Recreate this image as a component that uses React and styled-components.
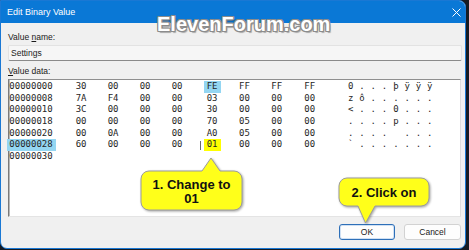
import React from 'react';
import styled, { createGlobalStyle } from 'styled-components';

const GlobalStyle = createGlobalStyle`
  html, body {
    margin: 0;
    background: #161b23;
  }
  * { box-sizing: border-box; }
`;

const rows = [
  { offset: '00000000', bytes: ['30', '00', '00', '00', 'FE', 'FF', 'FF', 'FF'], chars: ['0', '.', '.', '.', 'þ', 'ÿ', 'ÿ', 'ÿ'] },
  { offset: '00000008', bytes: ['7A', 'F4', '00', '00', '03', '00', '00', '00'], chars: ['z', 'ô', '.', '.', '.', '.', '.', '.'] },
  { offset: '00000010', bytes: ['3C', '00', '00', '00', '30', '00', '00', '00'], chars: ['<', '.', '.', '.', '0', '.', '.', '.'] },
  { offset: '00000018', bytes: ['00', '00', '00', '00', '70', '05', '00', '00'], chars: ['.', '.', '.', '.', 'p', '.', '.', '.'] },
  { offset: '00000020', bytes: ['00', '0A', '00', '00', 'A0', '05', '00', '00'], chars: ['.', '.', '.', '.', ' ', '.', '.', '.'] },
  { offset: '00000028', bytes: ['60', '00', '00', '00', '01', '00', '00', '00'], chars: ['`', '.', '.', '.', '.', '.', '.', '.'] },
  { offset: '00000030', bytes: [], chars: [] },
];

export default function App() {
  return (
    <>
      <GlobalStyle />
      <Window>
        <TitleBar>
          <Title>Edit Binary Value</Title>
          <svg width="9" height="9" viewBox="0 0 9 9">
            <path d="M0.5 0.5 L8.5 8.5 M8.5 0.5 L0.5 8.5" stroke="#fff" strokeWidth="1" />
          </svg>
        </TitleBar>
        <Body>
          <Label>Value <u>n</u>ame:</Label>
          <NameField>Settings</NameField>
          <Label $gap>
            <u>V</u>alue data:
          </Label>
          <HexBox>
            {rows.map((r, i) => (
              <HexRow key={r.offset}>
                <Cell>{i === 5 ? <Mark $color="#94d6f2" $pl={2}>{r.offset}</Mark> : r.offset}</Cell>
                {r.bytes.map((b, j) => (
                  <Cell key={j}>
                    {i === 0 && j === 4 && <Mark $color="#94d6f2">{b}</Mark>}
                    {i === 5 && j === 4 && (
                      <>
                        <Caret />
                        <Mark $color="#ffff00">{b}</Mark>
                      </>
                    )}
                    {!((i === 0 || i === 5) && j === 4) && b}
                  </Cell>
                ))}
                {r.chars.map((c, j) => (
                  <Cell key={'c' + j}>{c}</Cell>
                ))}
              </HexRow>
            ))}
          </HexBox>
          <Buttons>
            <Button $primary>OK</Button>
            <Button>Cancel</Button>
          </Buttons>
        </Body>

        <Watermark>ElevenForum.com</Watermark>

        <Callout style={{ left: 138, top: 154, width: 106, height: 58 }}>
          <svg width="106" height="58">
            <path
              d="M10 16 H63 L72 3 L81 16 H95 A8 8 0 0 1 103 24 V47 A8 8 0 0 1 95 55 H10 A8 8 0 0 1 2 47 V24 A8 8 0 0 1 10 16 Z"
              fill="#ffff1a"
              stroke="#9c9c9c"
              strokeWidth="1"
            />
          </svg>
          <CalloutText style={{ left: 2, top: 16, width: 101, height: 39 }} $pt={3}>
            <span>1. Change to</span>
            <span>01</span>
          </CalloutText>
        </Callout>

        <Callout style={{ left: 336, top: 175, width: 94, height: 50 }}>
          <svg width="94" height="50">
            <path
              d="M10 2 H84 A8 8 0 0 1 92 10 V22 A8 8 0 0 1 84 30 H38 L28.5 47 L21 30 H10 A8 8 0 0 1 2 22 V10 A8 8 0 0 1 10 2 Z"
              fill="#ffff1a"
              stroke="#9c9c9c"
              strokeWidth="1"
            />
          </svg>
          <CalloutText style={{ left: 2, top: 2, width: 90, height: 28 }} $pt={2}>
            <span>2. Click on</span>
          </CalloutText>
        </Callout>
      </Window>
    </>
  );
}

const Window = styled.div`
  position: relative;
  width: 466px;
  height: 249px;
  background: #f0f0f0;
  border: 1px solid #1a78d4;
  border-radius: 0 7px 7px 7px;
  overflow: hidden;
  font-family: "Liberation Sans", Arial, sans-serif;
`;

const TitleBar = styled.div`
  height: 23px;
  margin-top: -1px;
  background: #0a78d6;
  display: flex;
  align-items: center;
  justify-content: space-between;
  padding: 1px 4px 0 6px;
`;

const Title = styled.span`
  color: #fff;
  font-size: 9px;
`;

const Body = styled.div`
  padding: 8px 4px 0 7px;
  display: flex;
  flex-direction: column;
`;

const Label = styled.div`
  height: 12px;
  line-height: 12px;
  font-size: 8.5px;
  color: #1a1a1a;
  margin-top: ${(p) => (p.$gap ? '4px' : '0')};
  margin-bottom: 2px;
  u { text-decoration-thickness: 1px; text-underline-offset: 1px; }
`;

const NameField = styled.div`
  height: 16px;
  margin-right: -1px;
  background: #f6f6f6;
  border: 1px solid #e2e2e2;
  border-bottom: 1px solid #8a8a8a;
  border-radius: 2px;
  font-size: 8.5px;
  line-height: 14px;
  padding-left: 2px;
  color: #222;
`;

const HexBox = styled.div`
  height: 138px;
  background: #fff;
  border: 1px solid;
  border-color: #8f8f8f #dcdcdc #e4e4e4 #7a7a7a;
  box-shadow: inset 1px 0 0 #b8b8b8;
  padding: 1px 0 0 0.3px;
  font-family: "DejaVu Sans Mono", monospace;
  font-size: 9px;
  color: #262626;
`;

const HexRow = styled.div`
  display: grid;
  grid-template-columns: 66.4px 32px 32px 32px 35px 32.3px 32.3px 33px 43.7px repeat(8, 11.3px);
  height: 11.7px;
  line-height: 11.7px;
  white-space: pre;
`;

const Cell = styled.span`
  position: relative;
`;

const Mark = styled.span`
  display: inline-block;
  height: 11.7px;
  background: ${(p) => p.$color};
  margin-left: -${(p) => p.$pl ?? 3}px;
  padding: 0 3.5px 0 ${(p) => p.$pl ?? 3}px;
`;

const Caret = styled.span`
  position: absolute;
  left: -7px;
  top: 1.5px;
  width: 1.5px;
  height: 9px;
  background: #6a6a6a;
`;

const Buttons = styled.div`
  display: flex;
  justify-content: flex-end;
  gap: 9px;
  margin-top: 7px;
`;

const Button = styled.button`
  width: ${(p) => (p.$primary ? '56px' : '57px')};
  height: 16px;
  padding: 0;
  background: #fdfdfd;
  border: 1px solid ${(p) => (p.$primary ? '#2d6fb8' : '#d2d2d2')};
  box-shadow: ${(p) => (p.$primary ? 'inset 0 0 0 1px #cfe0f3' : 'none')};
  border-radius: 3px;
  font-family: "Liberation Sans", Arial, sans-serif;
  font-size: 8.5px;
  color: #1a1a1a;
`;

const Watermark = styled.div`
  position: absolute;
  left: 156px;
  top: 13px;
  font-family: "Liberation Sans", Arial, sans-serif;
  font-weight: bold;
  font-size: 20px;
  line-height: 1;
  color: #fff;
  text-shadow:
    -1px -1px 0 #8c8c8c, 1px -1px 0 #8c8c8c, -1px 1px 0 #8c8c8c, 1px 1px 0 #8c8c8c,
    0 -1px 0 #8c8c8c, 0 1px 0 #8c8c8c, -1px 0 0 #8c8c8c, 1px 0 0 #8c8c8c,
    1.5px 1.5px 1px rgba(0, 0, 0, 0.3);
`;

const Callout = styled.div`
  position: absolute;
  svg {
    display: block;
    filter: drop-shadow(1px 1px 1px rgba(0, 0, 0, 0.35));
  }
`;

const CalloutText = styled.div`
  position: absolute;
  display: flex;
  flex-direction: column;
  align-items: center;
  justify-content: center;
  padding-top: ${(p) => p.$pt}px;
  font-family: "Liberation Sans", Arial, sans-serif;
  font-weight: bold;
  font-size: 13px;
  line-height: 14.5px;
  color: #111;
`;
